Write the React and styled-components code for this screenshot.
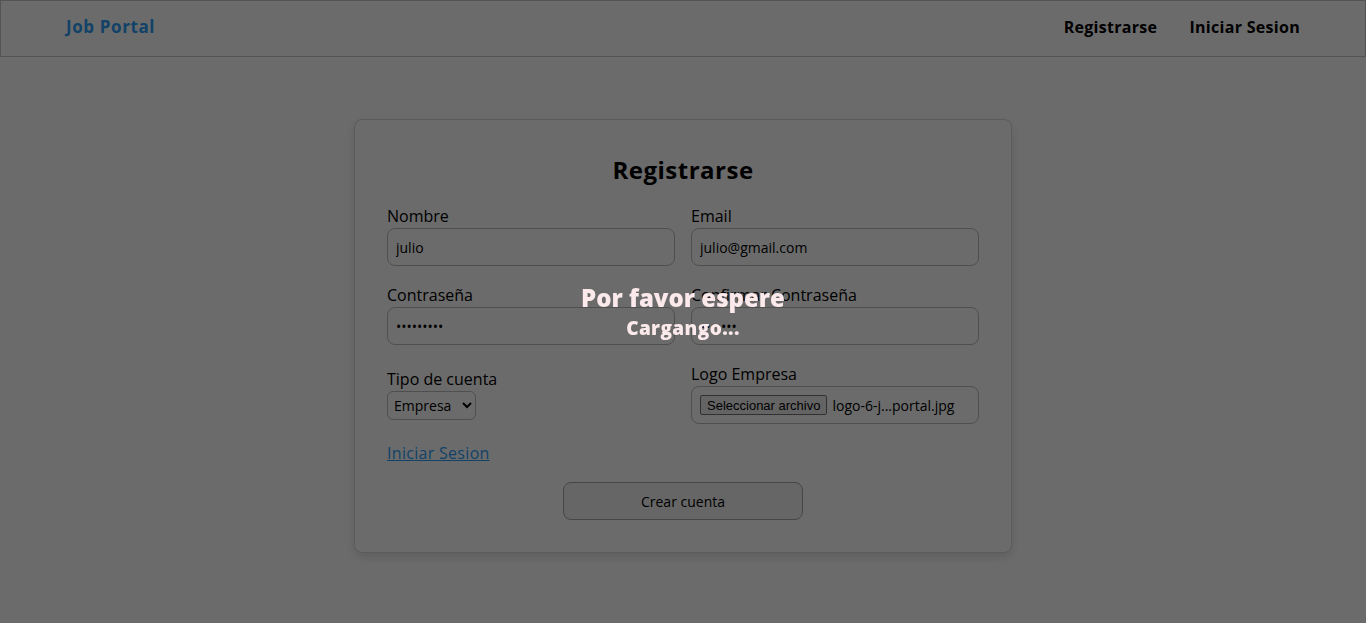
import React from 'react';
import styled, { createGlobalStyle } from 'styled-components';

const GlobalStyle = createGlobalStyle`
  html, body {
    margin: 0;
    padding: 0;
    background: #ffffff;
    font-family: "Open Sans", "Liberation Sans", sans-serif;
    color: #000;
  }
  * {
    box-sizing: border-box;
  }
`;

const Page = styled.div`
  min-height: 100vh;
  background: #ffffff;
`;

const Navbar = styled.header`
  height: 57px;
  border: 1px solid #c8c8c8;
  display: flex;
  align-items: center;
  justify-content: space-between;
  padding: 0 65px 4px;
`;

const Brand = styled.a`
  font-size: 17px;
  font-weight: 700;
  letter-spacing: 0.6px;
  color: #2b9ef5;
  text-decoration: none;
`;

const NavLinks = styled.nav`
  display: flex;
  gap: 32px;
`;

const NavLink = styled.a`
  font-size: 16px;
  font-weight: 700;
  letter-spacing: 0.3px;
  color: #000;
  text-decoration: none;
`;

const Main = styled.main`
  display: flex;
  justify-content: center;
  padding-top: 62px;
`;

const Card = styled.form`
  width: 658px;
  background: #ffffff;
  border: 1px solid #d8d8d8;
  border-radius: 8px;
  box-shadow: 0 4px 10px rgba(0, 0, 0, 0.12);
  padding: 32px;
  display: flex;
  flex-direction: column;
`;

const Title = styled.h2`
  margin: 0 0 16px;
  text-align: center;
  font-size: 24px;
  line-height: 36px;
  font-weight: 700;
  letter-spacing: 0.5px;
`;

const Row = styled.div`
  display: grid;
  grid-template-columns: 1fr 1fr;
  gap: 16px;
  margin-bottom: 17px;
  align-items: ${(p) => (p.$center ? 'center' : 'start')};
`;

const Field = styled.div`
  display: flex;
  flex-direction: column;
  align-items: flex-start;
`;

const Label = styled.label`
  font-size: 16px;
  line-height: 24px;
`;

const Input = styled.input`
  width: 100%;
  height: 38px;
  border: 1px solid #bdbdbd;
  border-radius: 8px;
  padding: 0 8px;
  font-family: "Open Sans", "Liberation Sans", sans-serif;
  font-size: 14px;
  color: #000;
  background: #fff;
  outline: none;
`;

const Select = styled.select`
  width: 89px;
  height: 29px;
  border: 1px solid #bdbdbd;
  border-radius: 6px;
  padding: 0 2px;
  font-family: "Open Sans", "Liberation Sans", sans-serif;
  font-size: 14px;
  color: #000;
  background: #fff;
`;

const FileBox = styled.div`
  width: 100%;
  height: 38px;
  border: 1px solid #bdbdbd;
  border-radius: 8px;
  padding: 0 8px;
  display: flex;
  align-items: center;
  gap: 5px;
  font-size: 14px;
`;

const FileButton = styled.span`
  height: 20px;
  padding: 0 6px;
  display: flex;
  align-items: center;
  border: 1px solid #767676;
  border-radius: 2px;
  background: #efefef;
  font-family: "Liberation Sans", Arial, sans-serif;
  font-size: 13px;
  color: #000;
`;

const FileName = styled.span`
  white-space: nowrap;
`;

const LoginLink = styled.a`
  align-self: flex-start;
  font-size: 16px;
  line-height: 24px;
  letter-spacing: 0.3px;
  color: #2b9ef5;
  text-decoration: underline;
  margin-bottom: 17px;
`;

const SubmitButton = styled.button`
  align-self: center;
  width: 240px;
  height: 38px;
  border: 1px solid #a8a8a8;
  border-radius: 8px;
  background: #f2f2f2;
  font-family: "Open Sans", "Liberation Sans", sans-serif;
  font-size: 14px;
  color: #000;
`;

const Overlay = styled.div`
  position: fixed;
  inset: 0;
  background: rgba(0, 0, 0, 0.58);
  display: flex;
  flex-direction: column;
  align-items: center;
  justify-content: center;
  gap: 1px;
  color: #fbe9eb;
  font-weight: 800;
`;

const OverlayTitle = styled.div`
  font-size: 24px;
  line-height: 32px;
  letter-spacing: 0px;
`;

const OverlayText = styled.div`
  font-size: 19px;
  line-height: 26px;
  letter-spacing: 0.4px;
`;

export default function App() {
  return (
    <>
      <GlobalStyle />
      <Page>
        <Navbar>
          <Brand href="#">Job Portal</Brand>
          <NavLinks>
            <NavLink href="#">Registrarse</NavLink>
            <NavLink href="#">Iniciar Sesion</NavLink>
          </NavLinks>
        </Navbar>
        <Main>
          <Card onSubmit={(e) => e.preventDefault()}>
            <Title>Registrarse</Title>
            <Row>
              <Field>
                <Label>Nombre</Label>
                <Input defaultValue="julio" />
              </Field>
              <Field>
                <Label>Email</Label>
                <Input defaultValue="julio@gmail.com" />
              </Field>
            </Row>
            <Row>
              <Field>
                <Label>Contraseña</Label>
                <Input type="password" defaultValue="123456789" />
              </Field>
              <Field>
                <Label>Confirmar Contraseña</Label>
                <Input type="password" defaultValue="1234567" />
              </Field>
            </Row>
            <Row $center>
              <Field>
                <Label>Tipo de cuenta</Label>
                <Select defaultValue="empresa">
                  <option value="empresa">Empresa</option>
                  <option value="candidato">Candidato</option>
                </Select>
              </Field>
              <Field>
                <Label>Logo Empresa</Label>
                <FileBox>
                  <FileButton>Seleccionar archivo</FileButton>
                  <FileName>logo-6-j...portal.jpg</FileName>
                </FileBox>
              </Field>
            </Row>
            <LoginLink href="#">Iniciar Sesion</LoginLink>
            <SubmitButton type="submit">Crear cuenta</SubmitButton>
          </Card>
        </Main>
      </Page>
      <Overlay>
        <OverlayTitle>Por favor espere</OverlayTitle>
        <OverlayText>Cargango...</OverlayText>
      </Overlay>
    </>
  );
}
